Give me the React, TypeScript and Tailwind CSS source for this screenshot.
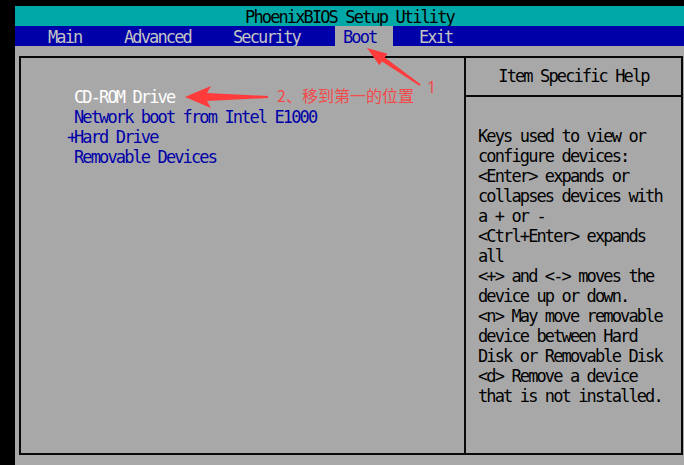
import React from 'react'

const helpLines = [
  'Keys used to view or',
  'configure devices:',
  '<Enter> expands or',
  'collapses devices with',
  'a + or -',
  '<Ctrl+Enter> expands',
  'all',
  '<+> and <-> moves the',
  'device up or down.',
  '<n> May move removable',
  'device between Hard',
  'Disk or Removable Disk',
  '<d> Remove a device',
  'that is not installed.',
]

const bootItems = [
  { prefix: '', label: 'CD-ROM Drive', selected: true },
  { prefix: '', label: 'Network boot from Intel E1000', selected: false },
  { prefix: '+', label: 'Hard Drive', selected: false },
  { prefix: '', label: 'Removable Devices', selected: false },
]

export default function App() {
  return (
    <div className="relative w-[684px] h-[465px] overflow-hidden bg-black pl-[15px] pt-[6px] flex flex-col font-['DejaVu_Sans_Mono',monospace] text-[17px] tracking-[-1.88px]">
      {/* title */}
      <div className="h-[20px] shrink-0 bg-[#00a8a8] text-black text-center pt-[1px] leading-[20px] whitespace-pre">
        PhoenixBIOS Setup Utility
      </div>

      {/* menu bar */}
      <div className="h-[20px] shrink-0 bg-[#0000a8] flex pt-[1px] leading-[20px] text-[#c4c4c4] whitespace-pre">
        <div className="w-[33px]" />
        <div className="w-[76px]">Main</div>
        <div className="w-[109px]">Advanced</div>
        <div className="w-[102px]">Security</div>
        <div className="w-[58px] pl-[8px] bg-[#a8a8a8] text-[#0000a8] -mt-[1px] pt-[1px]">Boot</div>
        <div className="pl-[26px]">Exit</div>
      </div>

      {/* body */}
      <div className="flex-1 bg-[#a8a8a8] pl-[4px] pt-[10px]">
        <div className="flex w-[664px] h-[399px] border-2 border-[#080808]">
          <div className="w-[443px] shrink-0 pt-[29px] pl-[46px] leading-[20px]">
            {bootItems.map((item) => (
              <div key={item.label} className="flex whitespace-pre">
                <span className="w-[7px] text-[#0000a8]">{item.prefix}</span>
                <span className={item.selected ? 'text-white' : 'text-[#0000a8]'}>{item.label}</span>
              </div>
            ))}
          </div>

          <div className="flex-1 flex flex-col border-l-2 border-[#080808]">
            <div className="h-[39px] shrink-0 flex items-center justify-center border-b-2 border-[#080808] text-black whitespace-pre">
              Item Specific Help
            </div>
            <div className="pt-[29px] pl-[12px] leading-[20px] text-black">
              {helpLines.map((line, i) => (
                <div key={i} className="whitespace-pre">{line}</div>
              ))}
            </div>
          </div>
        </div>
      </div>

      {/* annotations drawn over the screenshot */}
      <svg className="absolute left-0 top-0 pointer-events-none" width="684" height="465" viewBox="0 0 684 465">
        <polygon
          points="367,48 387.4,53.8 384.8,57.4 420.5,84.3 419.5,85.7 382,61.5 379.4,65.2"
          fill="#ff3b3b"
        />
        <polygon
          points="185,97 211,86 207,93 268,96 268,98 207,101 211,108"
          fill="#ff3b3b"
        />
      </svg>
      <span className="absolute left-[277px] top-[85px] text-[16px] leading-[20px] tracking-normal text-[#f24a4a] font-['Noto_Sans_CJK_SC','Noto_Sans',sans-serif] whitespace-pre">
        2、移到第一的位置
      </span>
      <span className="absolute left-[427px] top-[77px] text-[16px] leading-[20px] tracking-normal text-[#f24a4a] font-['Noto_Sans','Noto_Sans_CJK_SC',sans-serif]">
        1
      </span>
    </div>
  )
}
